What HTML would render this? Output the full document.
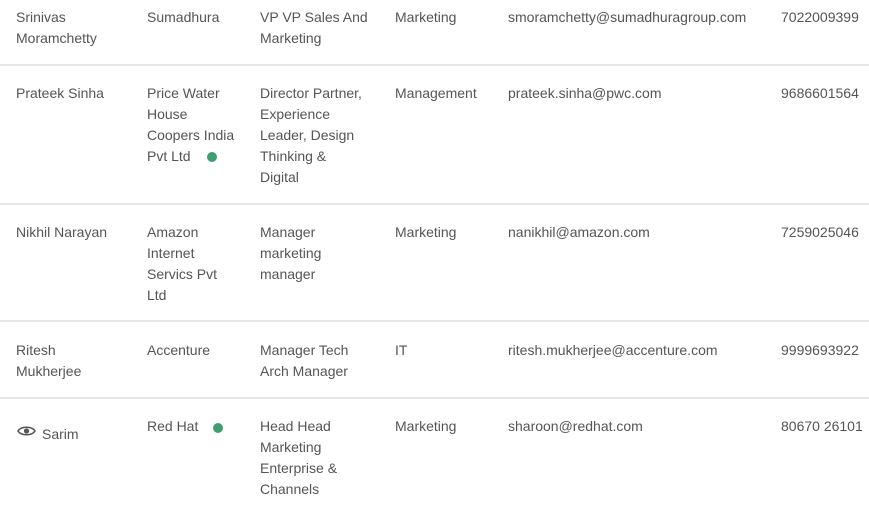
<!DOCTYPE html><html><head><style>
body{margin:0;width:869px;height:505px;background:#fff;position:relative;overflow:hidden;font-family:"Liberation Sans",sans-serif;font-size:14px;line-height:21px;color:#555}
.t{position:absolute;white-space:nowrap}
.l{position:absolute;left:0;width:869px;height:2px;background:#e6e6e6}
.d{position:absolute;width:10px;height:10px;border-radius:50%;background:#3f9e6e}
</style></head><body>
<div class="t" style="left:16px;top:7px">Srinivas<br>Moramchetty</div>
<div class="t" style="left:147px;top:7px">Sumadhura</div>
<div class="t" style="left:260px;top:7px">VP VP Sales And<br>Marketing</div>
<div class="t" style="left:395px;top:7px">Marketing</div>
<div class="t" style="left:508px;top:7px">smoramchetty@sumadhuragroup.com</div>
<div class="t" style="left:781px;top:7px">7022009399</div>
<div class="l" style="top:64px"></div>
<div class="t" style="left:16px;top:83px">Prateek Sinha</div>
<div class="t" style="left:147px;top:83px">Price Water<br>House<br>Coopers India<br>Pvt Ltd</div>
<div class="d" style="left:207px;top:152px"></div>
<div class="t" style="left:260px;top:83px">Director Partner,<br>Experience<br>Leader, Design<br>Thinking &amp;<br>Digital</div>
<div class="t" style="left:395px;top:83px">Management</div>
<div class="t" style="left:508px;top:83px">prateek.sinha@pwc.com</div>
<div class="t" style="left:781px;top:83px">9686601564</div>
<div class="l" style="top:203px"></div>
<div class="t" style="left:16px;top:222px">Nikhil Narayan</div>
<div class="t" style="left:147px;top:222px">Amazon<br>Internet<br>Servics Pvt<br>Ltd</div>
<div class="t" style="left:260px;top:222px">Manager<br>marketing<br>manager</div>
<div class="t" style="left:395px;top:222px">Marketing</div>
<div class="t" style="left:508px;top:222px">nanikhil@amazon.com</div>
<div class="t" style="left:781px;top:222px">7259025046</div>
<div class="l" style="top:320px"></div>
<div class="t" style="left:16px;top:340px">Ritesh<br>Mukherjee</div>
<div class="t" style="left:147px;top:340px">Accenture</div>
<div class="t" style="left:260px;top:340px">Manager Tech<br>Arch Manager</div>
<div class="t" style="left:395px;top:340px">IT</div>
<div class="t" style="left:508px;top:340px">ritesh.mukherjee@accenture.com</div>
<div class="t" style="left:781px;top:340px">9999693922</div>
<div class="l" style="top:397px"></div>
<svg style="position:absolute;left:17px;top:424px" width="19" height="14" viewBox="0 0 19 14"><path d="M1 7C4 2 15 2 18 7C15 12 4 12 1 7Z" fill="none" stroke="#555" stroke-width="1.6"/><circle cx="9.5" cy="7" r="2.6" fill="#555"/></svg>
<div class="t" style="left:42px;top:424px">Sarim</div>
<div class="t" style="left:147px;top:416px">Red Hat</div>
<div class="d" style="left:213px;top:423px"></div>
<div class="t" style="left:260px;top:416px">Head Head<br>Marketing<br>Enterprise &amp;<br>Channels</div>
<div class="t" style="left:395px;top:416px">Marketing</div>
<div class="t" style="left:508px;top:416px">sharoon@redhat.com</div>
<div class="t" style="left:781px;top:416px">80670 26101</div>
</body></html>
